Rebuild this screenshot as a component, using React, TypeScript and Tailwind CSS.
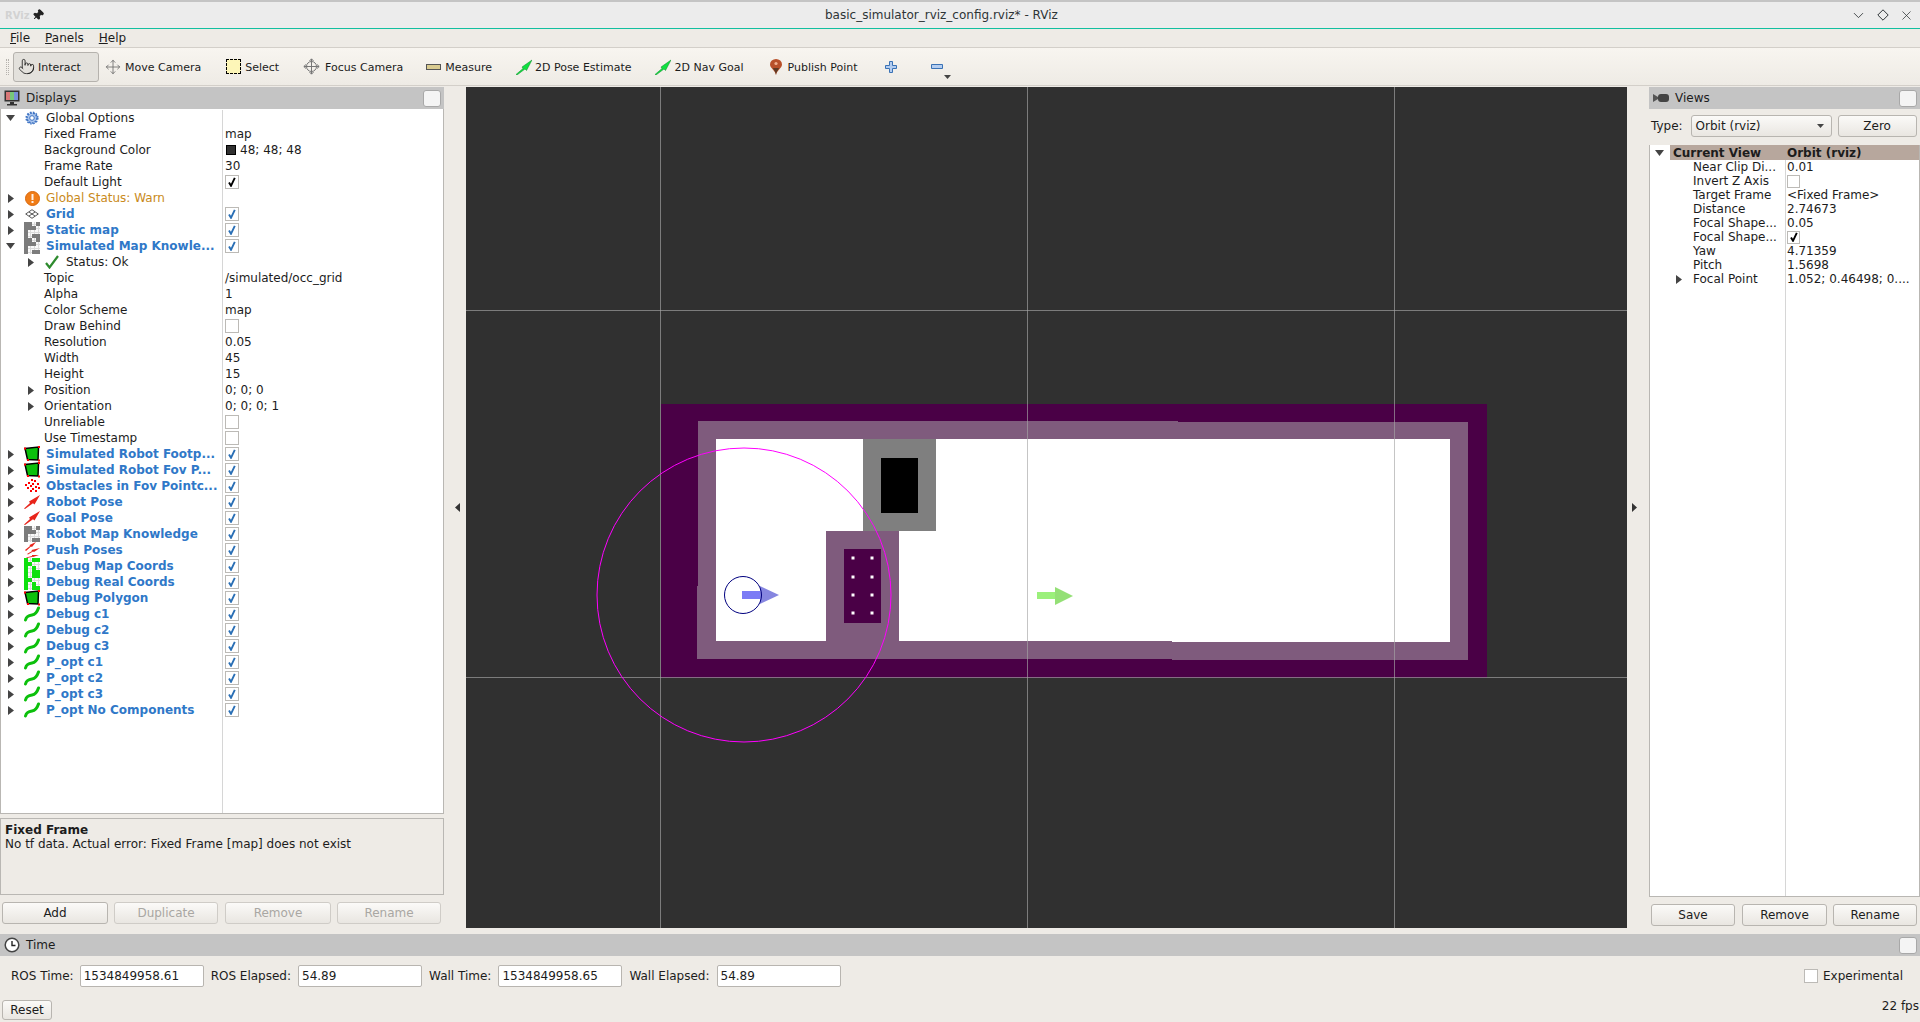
import type { ReactNode } from 'react'
import { ChevronDown, Pointer, Move, Pin, X } from 'lucide-react'

type IconKind = 'gear' | 'warn' | 'grid' | 'map' | 'poly' | 'cloud' | 'pose' | 'push' | 'greenmap' | 'path' | 'ok'

interface TreeRow {
  label: string
  kind: 'top' | 'prop' | 'status' | 'warn'
  arrow?: 'right' | 'down'
  icon?: IconKind
  value?: string
  check?: boolean
  swatch?: boolean
  plainCheck?: boolean
}

const displayRows: TreeRow[] = [
  { label: 'Global Options', kind: 'status', arrow: 'down', icon: 'gear' },
  { label: 'Fixed Frame', kind: 'prop', value: 'map' },
  { label: 'Background Color', kind: 'prop', value: '48; 48; 48', swatch: true },
  { label: 'Frame Rate', kind: 'prop', value: '30' },
  { label: 'Default Light', kind: 'prop', check: true, plainCheck: true },
  { label: 'Global Status: Warn', kind: 'warn', arrow: 'right', icon: 'warn' },
  { label: 'Grid', kind: 'top', arrow: 'right', icon: 'grid', check: true },
  { label: 'Static map', kind: 'top', arrow: 'right', icon: 'map', check: true },
  { label: 'Simulated Map Knowle...', kind: 'top', arrow: 'down', icon: 'map', check: true },
  { label: 'Status: Ok', kind: 'status', arrow: 'right', icon: 'ok' },
  { label: 'Topic', kind: 'prop', value: '/simulated/occ_grid' },
  { label: 'Alpha', kind: 'prop', value: '1' },
  { label: 'Color Scheme', kind: 'prop', value: 'map' },
  { label: 'Draw Behind', kind: 'prop', check: false, plainCheck: true },
  { label: 'Resolution', kind: 'prop', value: '0.05' },
  { label: 'Width', kind: 'prop', value: '45' },
  { label: 'Height', kind: 'prop', value: '15' },
  { label: 'Position', kind: 'prop', arrow: 'right', value: '0; 0; 0' },
  { label: 'Orientation', kind: 'prop', arrow: 'right', value: '0; 0; 0; 1' },
  { label: 'Unreliable', kind: 'prop', check: false, plainCheck: true },
  { label: 'Use Timestamp', kind: 'prop', check: false, plainCheck: true },
  { label: 'Simulated Robot Footp...', kind: 'top', arrow: 'right', icon: 'poly', check: true },
  { label: 'Simulated Robot Fov P...', kind: 'top', arrow: 'right', icon: 'poly', check: true },
  { label: 'Obstacles in Fov Pointc...', kind: 'top', arrow: 'right', icon: 'cloud', check: true },
  { label: 'Robot Pose', kind: 'top', arrow: 'right', icon: 'pose', check: true },
  { label: 'Goal Pose', kind: 'top', arrow: 'right', icon: 'pose', check: true },
  { label: 'Robot Map Knowledge', kind: 'top', arrow: 'right', icon: 'map', check: true },
  { label: 'Push Poses', kind: 'top', arrow: 'right', icon: 'push', check: true },
  { label: 'Debug Map Coords', kind: 'top', arrow: 'right', icon: 'greenmap', check: true },
  { label: 'Debug Real Coords', kind: 'top', arrow: 'right', icon: 'greenmap', check: true },
  { label: 'Debug Polygon', kind: 'top', arrow: 'right', icon: 'poly', check: true },
  { label: 'Debug c1', kind: 'top', arrow: 'right', icon: 'path', check: true },
  { label: 'Debug c2', kind: 'top', arrow: 'right', icon: 'path', check: true },
  { label: 'Debug c3', kind: 'top', arrow: 'right', icon: 'path', check: true },
  { label: 'P_opt c1', kind: 'top', arrow: 'right', icon: 'path', check: true },
  { label: 'P_opt c2', kind: 'top', arrow: 'right', icon: 'path', check: true },
  { label: 'P_opt c3', kind: 'top', arrow: 'right', icon: 'path', check: true },
  { label: 'P_opt No Components', kind: 'top', arrow: 'right', icon: 'path', check: true },
]

const viewRows: { label: string; value?: string; check?: boolean; arrow?: boolean }[] = [
  { label: 'Near Clip Di...', value: '0.01' },
  { label: 'Invert Z Axis', check: false },
  { label: 'Target Frame', value: '<Fixed Frame>' },
  { label: 'Distance', value: '2.74673' },
  { label: 'Focal Shape...', value: '0.05' },
  { label: 'Focal Shape...', check: true },
  { label: 'Yaw', value: '4.71359' },
  { label: 'Pitch', value: '1.5698' },
  { label: 'Focal Point', value: '1.052; 0.46498; 0....', arrow: true },
]

const grayCells = ['1101', '1110', '1000', '1011']
const greenCells = ['1011', '1100', '1010', '1011']

function MapIcon({ color, cells }: { color: string; cells: string[] }) {
  return (
    <svg width="16" height="16" viewBox="0 0 16 16">
      <rect width="16" height="16" fill="#fafafa" />
      <path d="M2.5 0V16M6.5 0V16M10.5 0V16M14.5 0V16M0 2.5H16M0 6.5H16M0 10.5H16M0 14.5H16" stroke="#dcdcdc" strokeWidth="1" />
      {cells.flatMap((row, y) =>
        row.split('').map((c, x) =>
          c === '1' ? <rect key={`${x}-${y}`} x={x * 4} y={y * 4} width="4" height="4" fill={color} /> : null,
        ),
      )}
    </svg>
  )
}

function TreeIcon({ kind }: { kind: IconKind }) {
  if (kind === 'map') return <MapIcon color="#7c7c7c" cells={grayCells} />
  if (kind === 'greenmap') return <MapIcon color="#0ee00e" cells={greenCells} />
  if (kind === 'gear') {
    return (
      <svg width="14" height="14" viewBox="0 0 14 14">
        <circle cx="7" cy="7" r="5" fill="#a9c4ec" stroke="#3f74c4" strokeWidth="1.6" strokeDasharray="2 1" />
        <circle cx="7" cy="7" r="5.9" fill="none" stroke="#3f74c4" strokeWidth="1.4" strokeDasharray="1.6 1.5" />
        <circle cx="7" cy="7" r="2.3" fill="#fff" stroke="#3f74c4" strokeWidth="1" />
      </svg>
    )
  }
  if (kind === 'warn') {
    return (
      <svg width="15" height="15" viewBox="0 0 15 15">
        <circle cx="7.5" cy="7.5" r="7" fill="#f07d18" stroke="#d9670c" />
        <rect x="6.5" y="3" width="2" height="6" fill="#fff" opacity="0.9" />
        <rect x="6.5" y="10" width="2" height="2" fill="#fff" opacity="0.9" />
      </svg>
    )
  }
  if (kind === 'grid') {
    return (
      <svg width="14" height="10" viewBox="0 0 14 10" fill="none" stroke="#555" strokeWidth="1">
        <path d="M7 .7 13.3 5 7 9.3.7 5Z" />
        <path d="M4 3 10 7M10 3 4 7" />
      </svg>
    )
  }
  if (kind === 'poly') {
    return (
      <svg width="16" height="16" viewBox="0 0 16 16">
        <path d="M1 2.5 14.5 1 14 14 3.5 13.5Z" fill="#0cc00c" stroke="#000" strokeWidth="1.5" />
        <rect y="1.5" width="2" height="2" fill="#f00" />
        <rect x="14" width="2" height="2" fill="#f00" />
        <rect x="14" y="13.5" width="2" height="2" fill="#f00" />
        <rect x="3" y="13" width="2" height="2" fill="#f00" />
      </svg>
    )
  }
  if (kind === 'cloud') {
    const dots = [[7, 1], [10, 2], [4, 4], [8, 5], [13, 5], [1, 6], [6, 7], [11, 8], [3, 9], [8, 10], [14, 9], [6, 12], [11, 12]]
    return (
      <svg width="16" height="16" viewBox="0 0 16 16">
        {dots.map(([x, y]) => (
          <rect key={`${x}-${y}`} x={x} y={y} width="2" height="2" fill="#f00" />
        ))}
      </svg>
    )
  }
  if (kind === 'pose') {
    return (
      <svg width="16" height="14" viewBox="0 0 16 14">
        <path d="M0 13.5 6 8 5 6.5 16 0 10.5 9.5 9 8.2 1 14Z" fill="#e8241a" />
      </svg>
    )
  }
  if (kind === 'push') {
    return (
      <svg width="16" height="16" viewBox="0 0 16 16">
        <path d="M1 8 6 4 5.5 3 12 0 8 5 7 4.6 2 9Z" fill="#e8241a" />
        <path d="M3 12 8 9 7.5 8 16 6 10 10 9 9.6 4 12.6Z" fill="#e8241a" />
        <path d="M2 15.5 8 14 8 13 15 13 9 15 9 14.8 3 16Z" fill="#e8241a" />
      </svg>
    )
  }
  if (kind === 'path') {
    return (
      <svg width="16" height="16" viewBox="0 0 16 16" fill="none">
        <path d="M1.5 14C2.5 10 5 9.5 8 9S13 6.5 14.5 2" stroke="#0cc00c" strokeWidth="3" strokeLinecap="round" />
      </svg>
    )
  }
  return (
    <svg width="14" height="14" viewBox="0 0 14 14" fill="none">
      <path d="M1 8 4.5 12.5 13 1" stroke="#2e8b2e" strokeWidth="2.2" />
    </svg>
  )
}

function TreeArrow({ dir }: { dir: 'right' | 'down' }) {
  if (dir === 'down') {
    return (
      <svg width="9" height="6" viewBox="0 0 9 6">
        <path d="M0 0H9L4.5 6Z" fill="#444" />
      </svg>
    )
  }
  return (
    <svg width="6" height="9" viewBox="0 0 6 9">
      <path d="M0 0V9L6 4.5Z" fill="#444" />
    </svg>
  )
}

function CheckBox({ checked, color = '#000', size = 14 }: { checked?: boolean; color?: string; size?: number }) {
  const box = size === 14 ? 'h-[14px] w-[14px]' : 'h-[13px] w-[13px]'
  return (
    <span className={`flex items-center justify-center border border-[#bcbab6] bg-white ${box}`}>
      {checked && (
        <svg width="8" height="10" viewBox="0 0 8 10" fill="none">
          <path d="M1 5.5 3 8.8 6.8.8" stroke={color} strokeWidth="1.9" />
        </svg>
      )}
    </span>
  )
}

function FloatBox() {
  return <span className="ml-auto mr-[3px] h-[17px] w-[18px] rounded-[3px] border border-[#a8a8a8] bg-[#f4f4f4]" />
}

function DisplayRow({ row }: { row: TreeRow }) {
  const nameClass =
    row.kind === 'top'
      ? 'font-bold text-[#2f78c8]'
      : row.kind === 'warn'
        ? 'text-[#c98a20]'
        : 'text-[#1c1c1c]'
  const isSub = row.label === 'Status: Ok'
  return (
    <div className="flex h-4 items-center whitespace-nowrap">
      <div className="flex h-4 w-[221px] items-center">
        {row.kind === 'prop' ? (
          <span className="flex w-[43px] justify-end pr-[10px]">{row.arrow && <TreeArrow dir={row.arrow} />}</span>
        ) : (
          <>
            <span className={`flex justify-center ${isSub ? 'w-[43px] pl-[20px] pr-[3px]' : 'w-[23px] pr-[4px]'}`}>
              {row.arrow && <TreeArrow dir={row.arrow} />}
            </span>
            <span className={`flex h-4 items-center justify-center ${isSub ? 'w-[15px]' : 'w-[16px]'}`}>
              {row.icon && <TreeIcon kind={row.icon} />}
            </span>
            <span className={isSub ? 'w-[7px]' : 'w-[6px]'} />
          </>
        )}
        <span className={nameClass}>{row.label}</span>
      </div>
      <div className="flex h-4 flex-1 items-center border-l border-[#d6d6d6] pl-[2px] text-[#1c1c1c]">
        {row.swatch && <span className="ml-[1px] mr-[4px] h-[10px] w-[10px] border border-black bg-[#303030]" />}
        {row.value}
        {row.check !== undefined && <CheckBox checked={row.check} color={row.plainCheck ? '#000' : '#2a6fb5'} />}
      </div>
    </div>
  )
}

function QtButton({ children, disabled, className }: { children: ReactNode; disabled?: boolean; className: string }) {
  return (
    <button
      className={`flex h-[22px] items-center justify-center rounded-[3px] border bg-gradient-to-b from-[#fbfaf8] to-[#e9e6e1] ${
        disabled ? 'border-[#cfccc7] text-[#a9a7a3]' : 'border-[#b8b5b0] text-[#1c1c1c]'
      } ${className}`}
    >
      {children}
    </button>
  )
}

function TimeField({ value, className }: { value: string; className: string }) {
  return (
    <span className={`flex h-[22px] w-[124px] items-center rounded-[2px] border border-[#b8b5b0] bg-white pl-[3px] ${className}`}>
      {value}
    </span>
  )
}

function ToolItem({ icon, label, className }: { icon: ReactNode; label: string; className: string }) {
  return (
    <span className={`flex items-center whitespace-nowrap ${className}`}>
      {icon}
      <span className="pt-[4px]">{label}</span>
    </span>
  )
}

function GreenArrow() {
  return (
    <svg width="16" height="16" viewBox="0 0 16 16" className="mr-[3px]">
      <path d="M0 15.5 7 9.5 6 8 16 1 10.5 11.5 9 10 1 16Z" fill="#10e040" stroke="#0a8a28" strokeWidth="0.5" />
    </svg>
  )
}

function Scene() {
  // coordinates are page pixels minus the viewport origin (466, 87)
  const ox = 466
  const oy = 87
  const dots = [853, 872].flatMap((x) => [558, 577, 595, 613].map((y) => [x - ox, y - oy]))
  return (
    <svg width="1161" height="841" viewBox="0 0 1161 841" className="block">
      <rect width="1161" height="841" fill="#303030" />
      <path d={`M${661 - ox} ${404 - oy}H${1487 - ox}V${678 - oy}H${661 - ox}Z`} fill="#4a0046" />
      <path
        d={`M${698 - ox} ${421 - oy}H${1178 - ox}V${422 - oy}H${1468 - ox}V${660 - oy}H${1172 - ox}V${659 - oy}H${697 - ox}V${586 - oy}H${698 - ox}Z`}
        fill="#7f5b7d"
      />
      <path
        d={`M${716 - ox} ${439 - oy}H${1450 - ox}V${642 - oy}H${1172 - ox}V${641 - oy}H${716 - ox}Z`}
        fill="#fff"
      />
      <rect x={863 - ox} y={439 - oy} width="73" height="92" fill="#7f7f7f" />
      <rect x={881 - ox} y={458 - oy} width="37" height="55" fill="#000" />
      <rect x={826 - ox} y={531 - oy} width="73" height="110" fill="#7f5b7d" />
      <rect x={844 - ox} y={549 - oy} width="37" height="74" fill="#4a0046" />
      {dots.map(([x, y]) => (
        <rect key={`${x}-${y}`} x={x - 1.5} y={y - 1.5} width="3" height="3" fill="#fff" />
      ))}
      <g stroke="#a6a6a6" strokeOpacity="0.65" strokeWidth="1">
        <path d={`M${660.5 - ox} 0V841M${1027.5 - ox} 0V841M${1394.5 - ox} 0V841`} />
        <path d={`M0 ${310.5 - oy}H1161M0 ${677.5 - oy}H1161`} />
      </g>
      <circle cx={744 - ox} cy={595 - oy} r="147" fill="none" stroke="#ff00ff" strokeWidth="1" />
      <path d={`M${742 - ox} ${591 - oy}H${760 - ox}V${599 - oy}H${742 - ox}Z`} fill="#7b7bf5" />
      <path d={`M${760 - ox} ${586 - oy}L${779 - ox} ${595 - oy}L${760 - ox} ${604 - oy}Z`} fill="#8686e0" />
      <circle cx={743 - ox} cy={595 - oy} r="18.5" fill="none" stroke="#00007f" strokeWidth="1" />
      <path d={`M${1037 - ox} ${592 - oy}H${1055 - ox}V${599 - oy}H${1037 - ox}Z`} fill="#9bf07b" />
      <path d={`M${1055 - ox} ${587 - oy}L${1073 - ox} ${596 - oy}L${1055 - ox} ${605 - oy}Z`} fill="#94e076" />
    </svg>
  )
}

export default function App() {
  return (
    <div className="flex h-[1022px] w-[1920px] flex-col overflow-hidden bg-[#eeebe6] font-['DejaVu_Sans',sans-serif] text-[12px] text-[#1c1c1c]">
      {/* window title */}
      <div className="flex h-[29px] items-center border-t-2 border-b border-t-[#c4c4c4] border-b-[#12bfa0] bg-[#ececec]">
        <span className="ml-[5px] w-[19px] text-[10px] font-bold text-[#d2d2d2]">RViz</span>
        <Pin size={12} className="ml-[8px] rotate-45 fill-[#222] text-[#222]" />
        <span className="ml-[781px] text-[12px] text-[#2e3436]">basic_simulator_rviz_config.rviz* - RViz</span>
        <ChevronDown size={17} strokeWidth={1.2} className="ml-auto text-[#2e3436]" />
        <svg width="12" height="12" viewBox="0 0 12 12" fill="none" stroke="#2e3436" className="ml-[10px]">
          <path d="M6 .8 11.2 6 6 11.2.8 6Z" />
        </svg>
        <X size={15} strokeWidth={1.2} className="ml-[10px] mr-[6px] text-[#2e3436]" />
      </div>
      {/* menu */}
      <div className="flex h-[18px] items-center pl-[10px]">
        <span className="mr-[15px]"><span className="underline">F</span>ile</span>
        <span className="mr-[15px]"><span className="underline">P</span>anels</span>
        <span><span className="underline">H</span>elp</span>
      </div>
      {/* toolbar */}
      <div className="flex h-[39px] items-center border-y border-[#d3cfc9] bg-gradient-to-b from-[#f8f5f0] to-[#eeebe5] text-[11px]">
        <span className="ml-[6px] h-[16px] w-[3px] border-x border-dotted border-[#b5b2ad]" />
        <span className="ml-[4px] flex h-[30px] w-[86px] items-center rounded-[3px] border border-[#b5b2ad] bg-[#e3e1dc] pl-[4px]">
          <Pointer size={17} strokeWidth={1.2} className="mr-[3px]" />
          <span className="pt-[4px]">Interact</span>
        </span>
        <ToolItem
          className="ml-[6px]"
          label="Move Camera"
          icon={<Move size={16} strokeWidth={1.2} className="mr-[4px] text-[#666]" />}
        />
        <ToolItem
          className="ml-[25px]"
          label="Select"
          icon={<span className="mr-[4px] h-[15px] w-[15px] border border-dashed border-black bg-[#fdf6b8]" />}
        />
        <ToolItem
          className="ml-[24px]"
          label="Focus Camera"
          icon={
            <svg width="17" height="17" viewBox="0 0 17 17" fill="none" stroke="#777" className="mr-[5px]">
              <circle cx="8.5" cy="8.5" r="5" />
              <path d="M8.5 1V16M1 8.5H16M6.5 3 8.5 .8 10.5 3M6.5 14 8.5 16.2 10.5 14M3 6.5 .8 8.5 3 10.5M14 6.5 16.2 8.5 14 10.5" />
            </svg>
          }
        />
        <ToolItem
          className="ml-[23px]"
          label="Measure"
          icon={<span className="mr-[4px] h-[6px] w-[15px] border border-[#555] bg-[#d9cb90]" />}
        />
        <ToolItem className="ml-[24px]" label="2D Pose Estimate" icon={<GreenArrow />} />
        <ToolItem className="ml-[24px]" label="2D Nav Goal" icon={<GreenArrow />} />
        <ToolItem
          className="ml-[27px]"
          label="Publish Point"
          icon={
            <svg width="12" height="16" viewBox="0 0 12 16" className="mr-[5px]">
              <path d="M6 16C5 11 0 9 0 5.5a6 5.5 0 0 1 12 0C12 9 7 11 6 16Z" fill="#b8502a" />
              <path d="M6 16C5.5 12 3 10 3 9H9C9 10 6.5 12 6 16Z" fill="#5e3a25" />
              <circle cx="6" cy="4.5" r="1.6" fill="#f0b090" />
            </svg>
          }
        />
        <svg width="12" height="12" viewBox="0 0 12 12" className="ml-[27px]">
          <path d="M4.5.5H7.5V4.5H11.5V7.5H7.5V11.5H4.5V7.5H.5V4.5H4.5Z" fill="#b4cdf0" stroke="#3a72b5" />
        </svg>
        <svg width="12" height="5" viewBox="0 0 12 5" className="ml-[34px]">
          <path d="M.5.5H11.5V4.5H.5Z" fill="#b4cdf0" stroke="#3a72b5" />
        </svg>
        <svg width="7" height="4" viewBox="0 0 7 4" className="ml-[1px] mt-[20px]">
          <path d="M0 0H7L3.5 4Z" fill="#444" />
        </svg>
      </div>

      <div className="mt-[1px] flex h-[841px]">
        {/* displays panel */}
        <div className="flex w-[444px] flex-col">
          <div className="flex h-[22px] items-center bg-[#c4c4c4]">
            <svg width="16" height="16" viewBox="0 0 16 16" className="ml-[4px]">
              <rect x="0.5" y="0.5" width="15" height="11" fill="#333" />
              <rect x="2" y="2" width="4" height="8" fill="#d87878" />
              <rect x="6" y="2" width="4" height="8" fill="#78c878" />
              <rect x="10" y="2" width="4" height="8" fill="#7890d8" />
              <rect x="6" y="12" width="4" height="2" fill="#333" />
              <rect x="3" y="14" width="10" height="1.5" fill="#333" />
            </svg>
            <span className="ml-[6px]">Displays</span>
            <FloatBox />
          </div>
          <div className="h-[705px] overflow-hidden border border-t-0 border-[#b9b7b3] bg-white pt-[1px]">
            {displayRows.map((row, i) => (
              <DisplayRow key={i} row={row} />
            ))}
            <div className="ml-[221px] h-[96px] border-l border-[#d6d6d6]" />
          </div>
          <div className="mt-[4px] h-[77px] border border-[#b9b7b3] px-[4px] pt-[4px] leading-[14px]">
            <div className="font-bold">Fixed Frame</div>
            <div>No tf data. Actual error: Fixed Frame [map] does not exist</div>
          </div>
          <div className="mt-[7px] flex pl-[2px]">
            <QtButton className="w-[106px]">Add</QtButton>
            <QtButton disabled className="ml-[6px] w-[104px]">Duplicate</QtButton>
            <QtButton disabled className="ml-[7px] w-[106px]">Remove</QtButton>
            <QtButton disabled className="ml-[6px] w-[104px]">Rename</QtButton>
          </div>
        </div>

        <div className="flex w-[22px] items-center pl-[11px]">
          <svg width="5" height="9" viewBox="0 0 5 9">
            <path d="M5 0V9L0 4.5Z" fill="#333" />
          </svg>
        </div>
        <Scene />
        <div className="flex w-[22px] items-center pl-[5px]">
          <svg width="5" height="9" viewBox="0 0 5 9">
            <path d="M0 0V9L5 4.5Z" fill="#333" />
          </svg>
        </div>

        {/* views panel */}
        <div className="flex w-[271px] flex-col">
          <div className="flex h-[22px] items-center bg-[#c4c4c4]">
            <svg width="16" height="10" viewBox="0 0 16 10" className="ml-[4px]">
              <path d="M0 1 5 4V6L0 9Z" fill="#555" />
              <rect x="5" y="1" width="11" height="8" rx="3" fill="#444" />
            </svg>
            <span className="ml-[6px]">Views</span>
            <FloatBox />
          </div>
          <div className="mt-[6px] flex h-[22px] items-center pl-[2px]">
            <span>Type:</span>
            <span className="ml-[8px] flex h-[22px] w-[141px] items-center rounded-[3px] border border-[#b8b5b0] bg-gradient-to-b from-[#fbfaf8] to-[#e9e6e1] pl-[4px]">
              Orbit (rviz)
              <svg width="7" height="4" viewBox="0 0 7 4" className="ml-auto mr-[7px]">
                <path d="M0 0H7L3.5 4Z" fill="#444" />
              </svg>
            </span>
            <QtButton className="ml-[6px] w-[79px]">Zero</QtButton>
          </div>
          <div className="mt-[8px] h-[752px] w-[271px] border border-t-0 border-[#b9b7b3] bg-white">
            <div className="flex h-[15px] items-center font-bold">
              <span className="flex w-[20px] justify-center pr-[1px]">
                <TreeArrow dir="down" />
              </span>
              <span className="flex h-[15px] flex-1 items-center bg-[#b7a79d]">
                <span className="w-[115px] pl-[3px]">Current View</span>
                <span className="pl-[2px]">Orbit (rviz)</span>
              </span>
            </div>
            {viewRows.map((row, i) => (
              <div key={i} className="flex h-[14px] items-center whitespace-nowrap">
                <span className="flex w-[43px] justify-end pr-[11px]">{row.arrow && <TreeArrow dir="right" />}</span>
                <span className="w-[92px]">{row.label}</span>
                <span className="flex h-[14px] flex-1 items-center border-l border-[#d6d6d6] pl-[1px]">
                  {row.value}
                  {row.check !== undefined && <CheckBox checked={row.check} size={13} />}
                </span>
              </div>
            ))}
            <div className="ml-[135px] h-[610px] border-l border-[#d6d6d6]" />
          </div>
          <div className="mt-[7px] flex pl-[2px]">
            <QtButton className="w-[84px]">Save</QtButton>
            <QtButton className="ml-[7px] w-[85px]">Remove</QtButton>
            <QtButton className="ml-[6px] w-[84px]">Rename</QtButton>
          </div>
        </div>
      </div>

      {/* time panel */}
      <div className="mt-[6px] flex h-[22px] items-center bg-[#c4c4c4]">
        <svg width="16" height="16" viewBox="0 0 16 16" fill="none" className="ml-[4px]">
          <circle cx="8" cy="8" r="6.8" fill="#fff" stroke="#444" strokeWidth="1.5" />
          <path d="M8 4V8.5H11.5" stroke="#222" strokeWidth="1.4" />
        </svg>
        <span className="ml-[6px]">Time</span>
        <FloatBox />
      </div>
      <div className="mt-[9px] flex h-[22px] items-center whitespace-nowrap pl-[11px]">
        <span>ROS Time:</span>
        <TimeField className="ml-[6px]" value="1534849958.61" />
        <span className="ml-[7px]">ROS Elapsed:</span>
        <TimeField className="ml-[7px]" value="54.89" />
        <span className="ml-[7px]">Wall Time:</span>
        <TimeField className="ml-[7px]" value="1534849958.65" />
        <span className="ml-[7px]">Wall Elapsed:</span>
        <TimeField className="ml-[7px]" value="54.89" />
        <span className="ml-auto">
          <CheckBox />
        </span>
        <span className="ml-[5px] mr-[17px]">Experimental</span>
      </div>
      <div className="mt-[13px] flex items-start pl-[2px]">
        <QtButton className="!h-[20px] w-[50px]">Reset</QtButton>
        <span className="ml-auto mr-[1px] -mt-[1px] leading-[14px]">22 fps</span>
      </div>
    </div>
  )
}
